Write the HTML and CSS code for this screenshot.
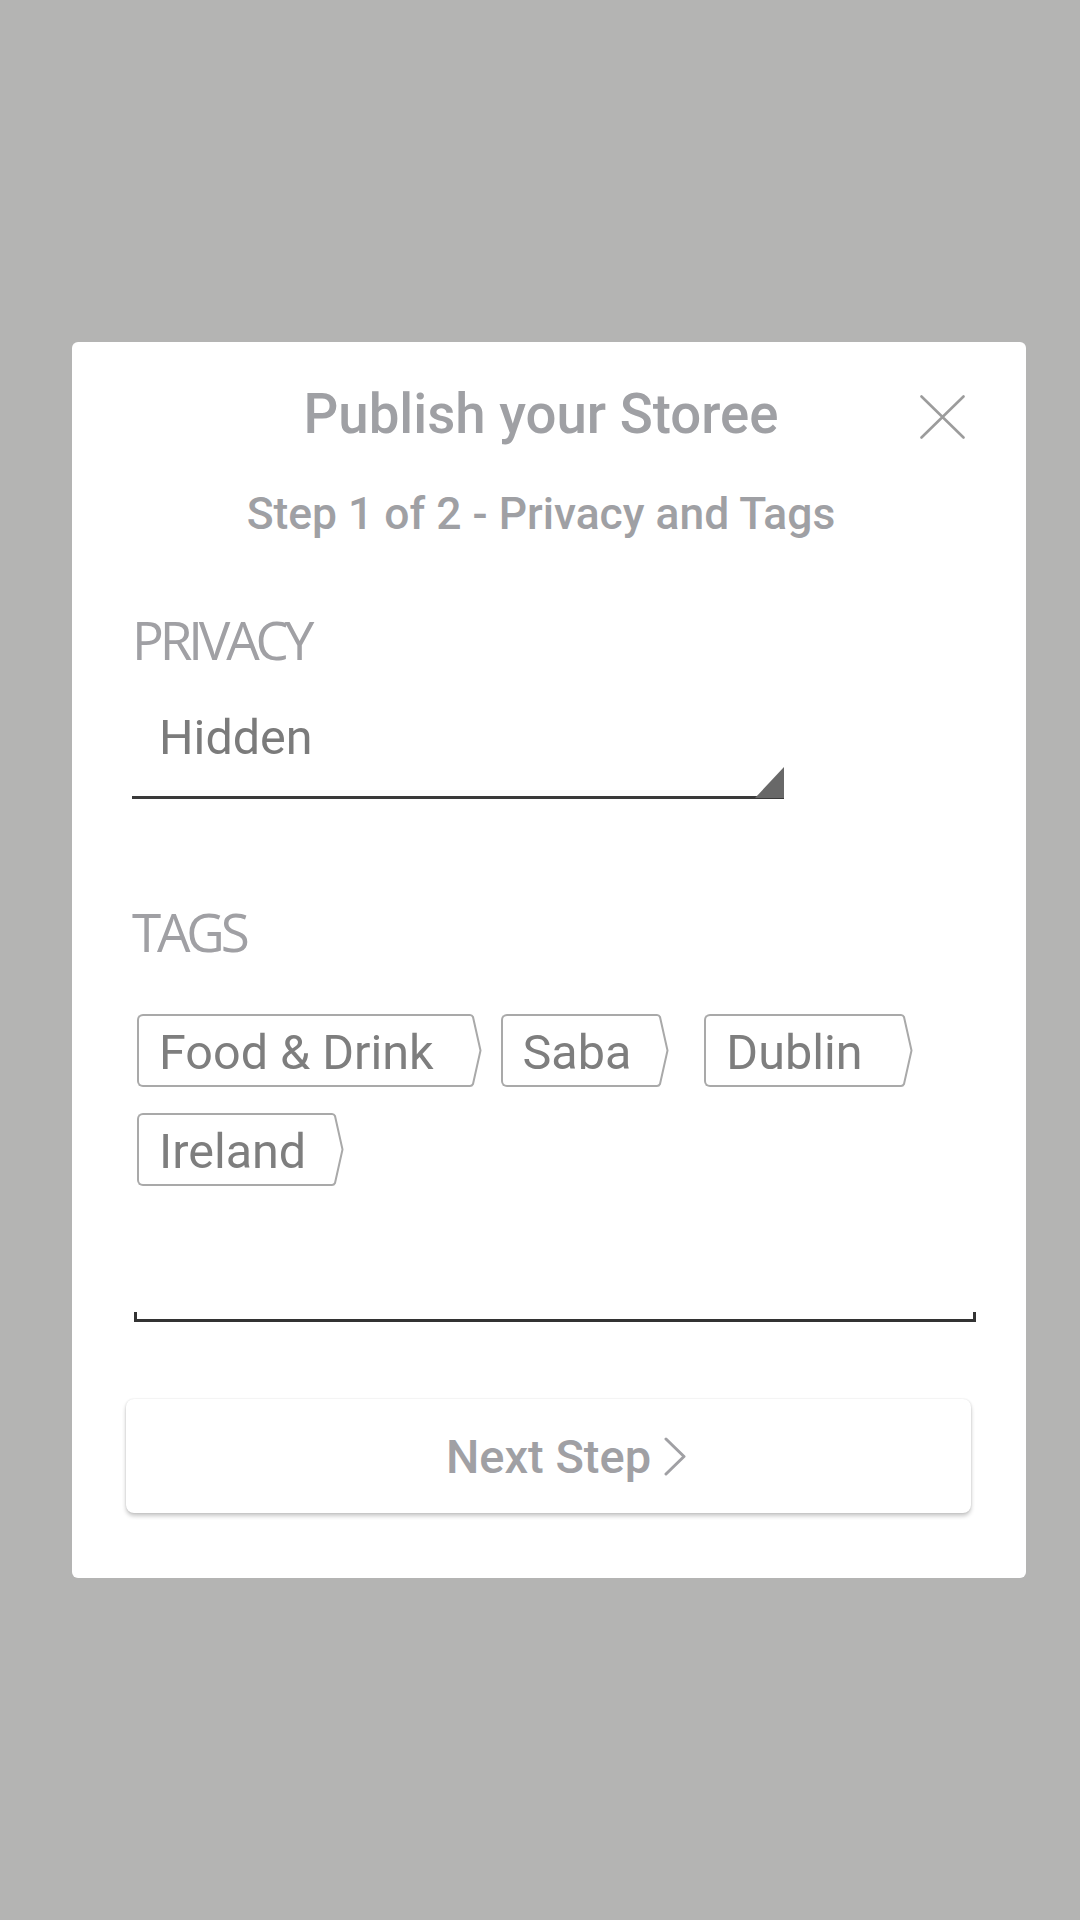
FILE: index.html
```html
<!DOCTYPE html>
<html>
<head>
    <title>Publish your Storee</title>
    <link rel="stylesheet" href="styles.css">
</head>
<body>
    <div class="dialog">
        <div class="dialog-header">
            <h1 class="dialog-title">Publish your Storee</h1>
            <h2 class="dialog-step">Step 1 of 2 - Privacy and Tags</h2>
        </div>
        <button class="close-button" aria-label="Close">
            <svg width="45" height="44" viewBox="0 0 45 44">
                <path d="M1.5 1.5 L43.5 42.5 M43.5 1.5 L1.5 42.5" stroke="#9c9c9c" stroke-width="2.6" stroke-linecap="round" fill="none"/>
            </svg>
        </button>

        <div class="form">
            <div class="field-label">PRIVACY</div>
            <div class="select">Hidden</div>

            <div class="field-label field-label-tags">TAGS</div>
            <div class="tag-list">
                <div class="tag">
                    <span class="tag-text">Food &amp; Drink&thinsp;</span>
                    <svg class="tag-point" width="16" height="73" viewBox="0 0 16 73"><path d="M0 1 H4 Q6 1 7 3 L14.5 36.5 L7 70 Q6 72 4 72 H0"/></svg>
                </div>
                <div class="tag">
                    <span class="tag-text">Saba</span>
                    <svg class="tag-point" width="16" height="73" viewBox="0 0 16 73"><path d="M0 1 H4 Q6 1 7 3 L14.5 36.5 L7 70 Q6 72 4 72 H0"/></svg>
                </div>
                <div class="tag tag-spaced">
                    <span class="tag-text">Dublin&nbsp;</span>
                    <svg class="tag-point" width="16" height="73" viewBox="0 0 16 73"><path d="M0 1 H4 Q6 1 7 3 L14.5 36.5 L7 70 Q6 72 4 72 H0"/></svg>
                </div>
                <div class="tag">
                    <span class="tag-text">Ireland</span>
                    <svg class="tag-point" width="16" height="73" viewBox="0 0 16 73"><path d="M0 1 H4 Q6 1 7 3 L14.5 36.5 L7 70 Q6 72 4 72 H0"/></svg>
                </div>
            </div>
            <div class="tag-input"></div>
        </div>

        <button class="next-button">
            <span>Next Step</span>
            <svg width="22" height="39" viewBox="0 0 22 39">
                <path d="M2 2 L20 19.5 L2 37" stroke="#a0a0a4" stroke-width="3" stroke-linecap="round" stroke-linejoin="round" fill="none"/>
            </svg>
        </button>
    </div>
</body>
</html>
```

FILE: styles.css
```css
body {
    margin: 0;
    padding: 342px 54px 0 72px;
    height: 1920px;
    box-sizing: border-box;
    background-color: #b4b4b3;
    font-family: Roboto, "Liberation Sans", sans-serif;
}
.dialog {
    position: relative;
    height: 1236px;
    box-sizing: border-box;
    padding-top: 40px;
    background-color: white;
    border-radius: 6px;
}
.dialog-header {
    padding-right: 16px;
    text-align: center;
    color: #9fa0a4;
}
.dialog-title {
    margin: 0;
    font-size: 54.6px;
    font-weight: 500;
    line-height: 64px;
}
.dialog-step {
    margin: 42px 0 0;
    font-size: 44.4px;
    font-weight: 500;
    line-height: 52px;
}
.close-button {
    position: absolute;
    top: 53px;
    right: 61px;
    padding: 0;
    border: none;
    background: none;
    line-height: 0;
}
.form {
    padding: 0 50px 0 60px;
}
.field-label {
    margin-top: 70px;
    font-family: "Open Sans", sans-serif;
    font-size: 53px;
    line-height: 60px;
    letter-spacing: -4.2px;
    color: #a0a0a4;
}
.field-label-tags {
    margin-top: 103px;
}
.select {
    position: relative;
    width: 652px;
    margin-top: 40px;
    padding: 0 0 30px 27px;
    box-sizing: border-box;
    font-size: 48.5px;
    line-height: 56px;
    color: #7b7b7b;
    border-bottom: 3px solid #3a3a3a;
}
.select::after {
    content: "";
    position: absolute;
    right: 0;
    bottom: -2px;
    border-left: 29px solid transparent;
    border-bottom: 31px solid #686868;
}
.tag-list {
    display: flex;
    flex-wrap: wrap;
    column-gap: 19px;
    row-gap: 26px;
    margin: 52px 0 0 5px;
}
.tag {
    display: flex;
    height: 73px;
}
.tag-spaced {
    margin-left: 16px;
}
.tag-text {
    padding: 4px 22px 0 20px;
    font-size: 48.5px;
    line-height: 65px;
    color: #7e7e7e;
    white-space: pre;
    border: 2px solid #a9a9a9;
    border-right: none;
    border-radius: 6px 0 0 6px;
}
.tag-point path {
    fill: none;
    stroke: #a9a9a9;
    stroke-width: 2;
    stroke-linejoin: round;
}
.tag-input {
    height: 10px;
    margin: 126px 0 0 2px;
    border: 3px solid #333;
    border-top: none;
    box-sizing: border-box;
}
.next-button {
    display: flex;
    align-items: center;
    justify-content: center;
    gap: 13px;
    width: 845px;
    height: 114px;
    margin: 77px 0 0 54px;
    padding: 0 0 0 35px;
    font-family: Roboto, sans-serif;
    font-size: 47px;
    font-weight: 500;
    line-height: 1;
    color: #a0a0a4;
    background-color: white;
    border: none;
    border-radius: 8px;
    box-shadow: 0 0 2px rgba(0,0,0,0.12), 0 3px 4px rgba(0,0,0,0.22);
}
```
